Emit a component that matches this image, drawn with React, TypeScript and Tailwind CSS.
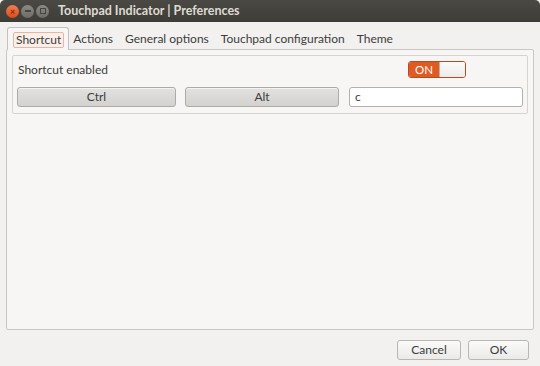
import React from "react";

export default function App() {
  const font = { fontFamily: 'Lato, "Open Sans", sans-serif' };
  return (
    <div className="w-[540px] h-[366px] bg-[#f2f1f0] flex flex-col text-[#3c3c3c] text-[12px]" style={font}>
      {/* title bar */}
      <div className="h-[22px] shrink-0 bg-gradient-to-b from-[#4a4944] to-[#3d3c37] flex items-center pl-[6px] rounded-t-[5px]">
        <div className="flex items-center gap-[2px]">
          <div className="w-[13px] h-[13px] rounded-full bg-gradient-to-b from-[#f27d4f] to-[#dd4a14] flex items-center justify-center text-[#7a2a0a] text-[9px] leading-none font-bold">×</div>
          <div className="w-[13px] h-[13px] rounded-full bg-gradient-to-b from-[#8b8a85] to-[#6d6c67] flex items-center justify-center">
            <div className="w-[6px] h-[1.5px] bg-[#46453f]" />
          </div>
          <div className="w-[13px] h-[13px] rounded-full bg-gradient-to-b from-[#8b8a85] to-[#6d6c67] flex items-center justify-center">
            <div className="w-[6px] h-[6px] border border-[#46453f]" />
          </div>
        </div>
        <div className="ml-[9px] text-[#dfdbd2] font-bold text-[12.5px] leading-none">Touchpad Indicator | Preferences</div>
      </div>

      {/* body */}
      <div className="flex-1 flex flex-col px-[6px] pt-[5px]">
        {/* tabs */}
        <div className="flex items-end h-[22px] pl-[1px]">
          <div className="h-[23px] pl-[5px] pr-[4px] pt-[4px] border border-b-0 border-[#c4c2bd] rounded-t-[3px] bg-[#f7f6f5] relative z-10 -mb-px">
            <div className="px-[2px] h-[16px] flex items-center border border-[#e9b4a0] rounded-[2px] bg-[#fbefea]">Shortcut</div>
          </div>
          <div className="pl-[4px] pr-[6px] h-[20px] flex items-center">Actions</div>
          <div className="px-[6px] h-[20px] flex items-center">General options</div>
          <div className="px-[6px] h-[20px] flex items-center">Touchpad configuration</div>
          <div className="px-[6px] h-[20px] flex items-center">Theme</div>
        </div>
        {/* page */}
        <div className="h-[281px] border border-[#c9c7c2] bg-[#f7f6f5] rounded-[2px] px-[5px] pt-[5px]">
          <div className="border border-[#d6d4cf] rounded-[2px] h-[59px] px-[4px] pt-[5px] flex flex-col">
            <div className="flex items-center justify-between h-[17px]">
              <span className="pl-px">Shortcut enabled</span>
              <div className="mr-[57px] w-[58px] h-[17px] rounded-[3px] border border-[#b84b1e] flex overflow-hidden">
                <div className="w-[30px] bg-[#e05a24] text-white text-[11.5px] flex items-center justify-center">ON</div>
                <div className="flex-1 bg-gradient-to-b from-[#fbfbfb] to-[#ecebe9] border-l border-[#b8b6b1]" />
              </div>
            </div>
            <div className="flex items-center mt-[9px] gap-[9px]">
              <div className="w-[159px] h-[20px] rounded-[3px] border border-[#adaba6] bg-gradient-to-b from-[#e2e1df] to-[#d3d2cf] flex items-center justify-center shadow-[inset_0_1px_0_#f4f3f1]">Ctrl</div>
              <div className="w-[154px] h-[20px] rounded-[3px] border border-[#adaba6] bg-gradient-to-b from-[#e2e1df] to-[#d3d2cf] flex items-center justify-center shadow-[inset_0_1px_0_#f4f3f1]">Alt</div>
              <div className="ml-[1px] w-[174px] h-[20px] rounded-[3px] border border-[#b3b1ac] bg-white flex items-center pl-[5px]">c</div>
            </div>
          </div>
        </div>
        {/* buttons */}
        <div className="flex justify-end gap-[7px] mt-[10px] pr-[5px]">
          <div className="w-[64px] h-[20px] rounded-[3px] border border-[#b9b7b2] bg-gradient-to-b from-[#fafaf9] to-[#ebeae8] flex items-center justify-center">Cancel</div>
          <div className="w-[61px] h-[20px] rounded-[3px] border border-[#b9b7b2] bg-gradient-to-b from-[#fafaf9] to-[#ebeae8] flex items-center justify-center">OK</div>
        </div>
      </div>
    </div>
  );
}
